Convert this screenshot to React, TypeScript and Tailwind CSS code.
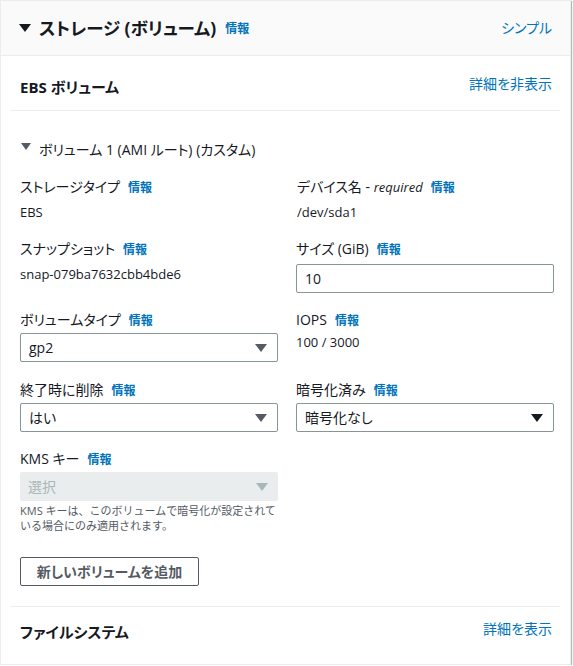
import React from "react";

const font = {
  fontFamily: '"Open Sans", "Noto Sans CJK JP", sans-serif',
};

function Info() {
  return (
    <span className="ml-[8px] text-[12px] font-bold text-[#0073bb]">情報</span>
  );
}

function Label({ children }: { children: React.ReactNode }) {
  return (
    <div className="flex items-baseline text-[14px] leading-[20px] text-[#16191f]">
      {children}
    </div>
  );
}

function Caret({ color = "#545b64" }: { color?: string }) {
  return (
    <svg width="12" height="8" viewBox="0 0 12 8">
      <path d="M0 0 L12 0 L6 8 Z" fill={color} />
    </svg>
  );
}

function Select({
  value,
  disabled,
  dark,
}: {
  value: string;
  disabled?: boolean;
  dark?: boolean;
}) {
  return (
    <div
      className={`mt-[2px] flex h-[29px] items-center justify-between rounded-[2px] pl-[8px] pr-[10px] text-[14px] ${
        disabled
          ? "bg-[#eaeded] text-[#aab7b8]"
          : "border border-[#879596] bg-white text-[#16191f]"
      }`}
    >
      <span>{value}</span>
      <Caret color={disabled ? "#aab7b8" : dark ? "#16191f" : "#545b64"} />
    </div>
  );
}

export default function App() {
  return (
    <div className="bg-white [font-feature-settings:'palt']" style={font}>
      <div className="h-[665px] w-[571px] overflow-hidden border border-[#eaeded] bg-white shadow-[1px_1px_1px_0_rgba(0,28,36,0.3)]">
        {/* header */}
        <div className="flex h-[55px] items-start justify-between border-b border-[#eaeded] bg-[#fafafa] pl-[18px] pr-[18px] pt-[15px]">
          <div className="flex items-center">
            <Caret color="#16191f" />
            <span className="ml-[8px] text-[17.5px] font-bold leading-[24px] text-[#16191f]">
              ストレージ (ボリューム)
            </span>
            <span className="ml-[9px] mt-[2px] text-[12px] font-bold text-[#0073bb]">
              情報
            </span>
          </div>
          <span className="pt-[1px] text-[14px] text-[#0073bb]">シンプル</span>
        </div>

        {/* EBS volumes */}
        <div className="mx-[10px] flex h-[55px] items-start justify-between border-b border-[#eaeded] pl-[9px] pr-[8px] pt-[20px]">
          <span className="text-[15px] font-bold leading-[22px] text-[#16191f]">
            EBS ボリューム
          </span>
          <span className="mt-[-3px] text-[14px] text-[#0073bb]">詳細を非表示</span>
        </div>

        <div className="px-[19px] pt-[29px]">
          <div className="flex items-center text-[14px] leading-[20px] text-[#16191f]">
            <svg width="10" height="8" viewBox="0 0 10 8" className="mr-[8px] mt-[-6px] ml-[1px]">
              <path d="M0 0 L10 0 L5 7 Z" fill="#545b64" />
            </svg>
            ボリューム 1 (AMI ルート) (カスタム)
          </div>

          <div className="mt-[17px] grid grid-cols-[258px_258px] gap-x-[18px]">
            {/* row 1 */}
            <div>
              <Label>
                ストレージタイプ <Info />
              </Label>
              <div className="mt-[4px] text-[13px] leading-[20px] text-[#16191f]">EBS</div>
            </div>
            <div className="pl-[1px]">
              <Label>
                デバイス名 -&nbsp;<i className="text-[13px]">required</i> <Info />
              </Label>
              <div className="mt-[4px] text-[13px] leading-[20px] text-[#16191f]">/dev/sda1</div>
            </div>

            {/* row 2 */}
            <div className="mt-[17px]">
              <Label>
                スナップショット <Info />
              </Label>
              <div className="mt-[4px] text-[13px] leading-[20px] text-[#16191f]">
                snap-079ba7632cbb4bde6
              </div>
            </div>
            <div className="mt-[17px]">
              <Label>
                サイズ (GiB) <Info />
              </Label>
              <div className="mt-[4px] flex h-[29px] items-center rounded-[2px] border border-[#879596] pl-[8px] text-[14px] text-[#16191f]">
                10
              </div>
            </div>

            {/* row 3 */}
            <div className="mt-[17px]">
              <Label>
                ボリュームタイプ <Info />
              </Label>
              <Select value="gp2" />
            </div>
            <div className="mt-[17px]">
              <Label>
                IOPS <Info />
              </Label>
              <div className="mt-[1px] text-[13px] leading-[20px] text-[#16191f]">100 / 3000</div>
            </div>

            {/* row 4 */}
            <div className="mt-[18px]">
              <Label>
                終了時に削除 <Info />
              </Label>
              <Select value="はい" />
            </div>
            <div className="mt-[18px]">
              <Label>
                暗号化済み <Info />
              </Label>
              <Select value="暗号化なし" dark />
            </div>

            {/* row 5 */}
            <div className="mt-[17px]">
              <Label>
                KMS キー <Info />
              </Label>
              <Select value="選択" disabled />
              <div className="mt-[2px] text-[11px] leading-[15px] text-[#545b64] [font-feature-settings:normal]">
                KMS キーは、このボリュームで暗号化が設定されている場合にのみ適用されます。
              </div>
            </div>
            <div />
          </div>

          <button className="mt-[24px] h-[29px] w-[179px] rounded-[2px] border border-[#545b64] bg-white text-[14px] font-bold text-[#545b64]">
            新しいボリュームを追加
          </button>
        </div>

        {/* File system */}
        <div className="mx-[10px] mt-[20px] flex items-start justify-between border-t border-[#eaeded] pl-[9px] pr-[8px] pt-[11px]">
          <span className="mt-[3px] text-[15px] font-bold leading-[22px] text-[#16191f]">
            ファイルシステム
          </span>
          <span className="text-[14px] text-[#0073bb]">詳細を表示</span>
        </div>
      </div>
    </div>
  );
}
